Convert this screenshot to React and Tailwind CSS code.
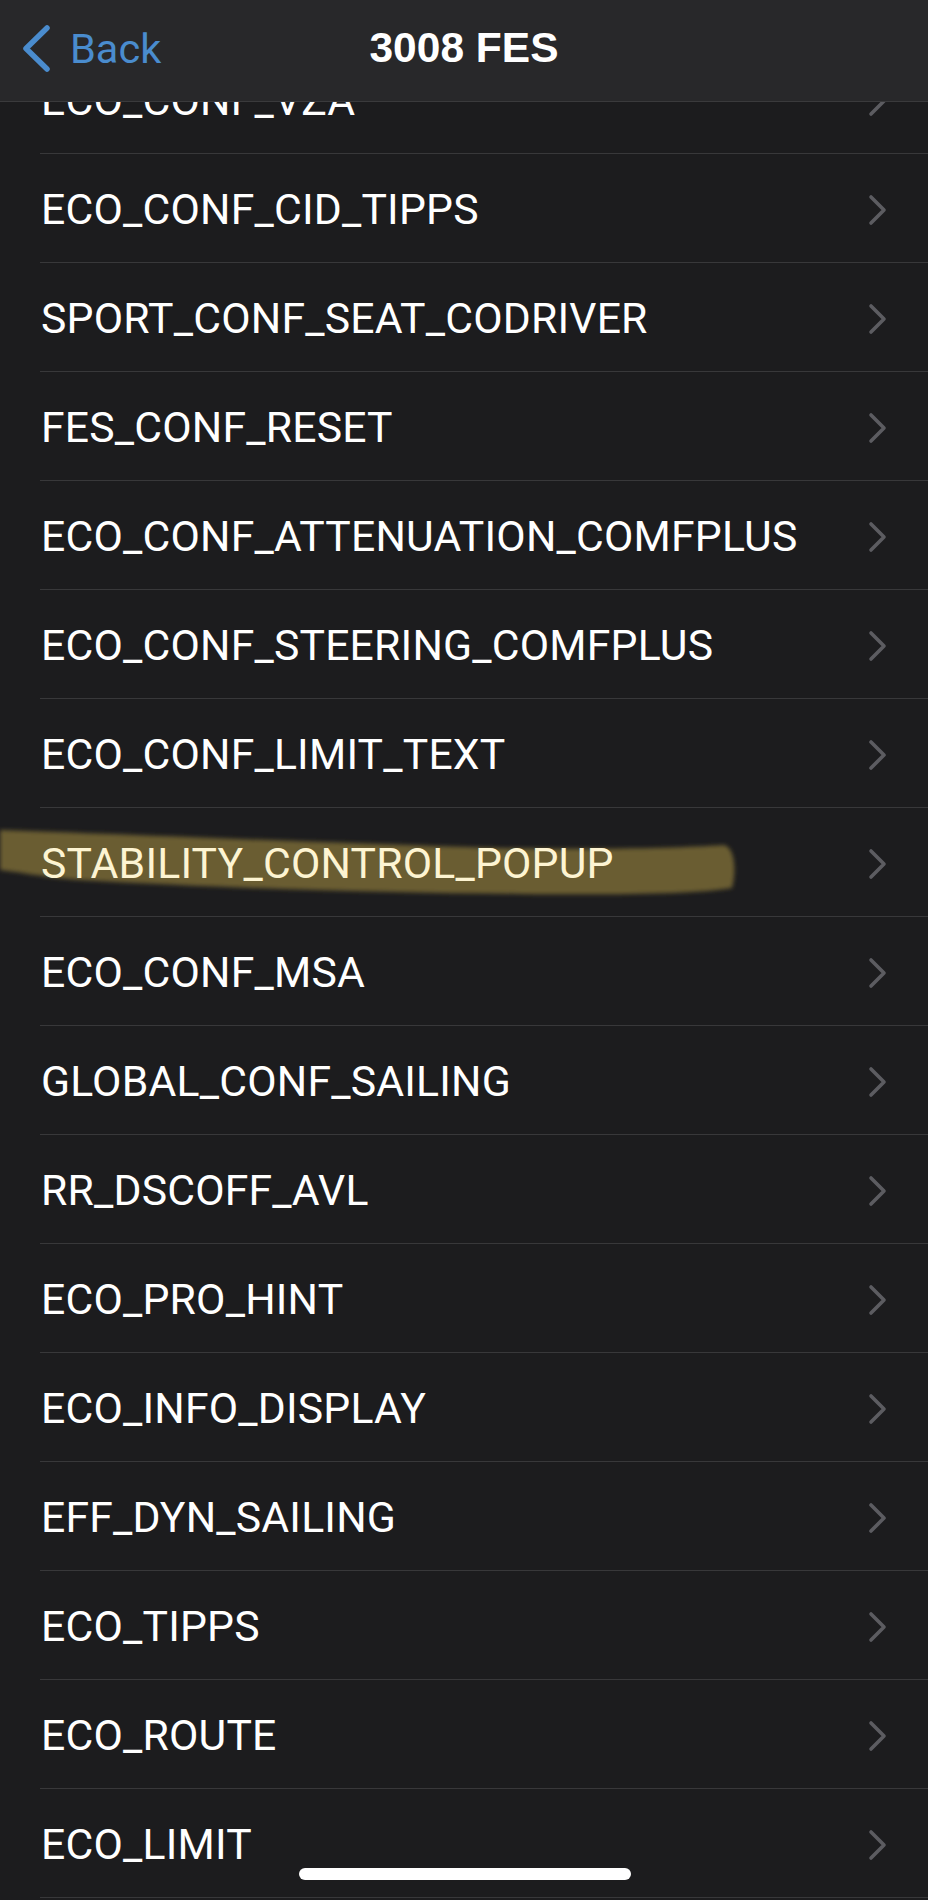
import React from "react";

const ITEMS = [
  "ECO_CONF_VZA",
  "ECO_CONF_CID_TIPPS",
  "SPORT_CONF_SEAT_CODRIVER",
  "FES_CONF_RESET",
  "ECO_CONF_ATTENUATION_COMFPLUS",
  "ECO_CONF_STEERING_COMFPLUS",
  "ECO_CONF_LIMIT_TEXT",
  "STABILITY_CONTROL_POPUP",
  "ECO_CONF_MSA",
  "GLOBAL_CONF_SAILING",
  "RR_DSCOFF_AVL",
  "ECO_PRO_HINT",
  "ECO_INFO_DISPLAY",
  "EFF_DYN_SAILING",
  "ECO_TIPPS",
  "ECO_ROUTE",
  "ECO_LIMIT",
];

function Chevron() {
  return (
    <svg width="22" height="34" viewBox="0 0 22 34" className="shrink-0 mt-[1px]">
      <path
        d="M4 4 L17 17 L4 30"
        fill="none"
        stroke="#5c5c61"
        strokeWidth="3.6"
        strokeLinecap="round"
        strokeLinejoin="round"
      />
    </svg>
  );
}

function Highlight() {
  return (
    <svg
      className="absolute left-0 top-0 pointer-events-none"
      width="760"
      height="109"
      viewBox="0 0 760 109"
    >
      <defs>
        <filter id="blur" x="-5%" y="-30%" width="110%" height="160%">
          <feGaussianBlur stdDeviation="2.2" />
        </filter>
      </defs>
      <path
        d="M0 22 C 120 26, 300 34, 500 40 C 600 42, 680 40, 724 37 C 736 40, 736 66, 732 80 C 700 86, 620 87, 520 86 C 380 85, 220 80, 80 72 C 40 69, 20 64, 0 62 Z"
        fill="#6a5d31"
        filter="url(#blur)"
      />
    </svg>
  );
}

function Row({ label }) {
  const hl = label === "STABILITY_CONTROL_POPUP";
  return (
    <div className="relative h-[109px]">
      {hl && <Highlight />}
      <div className="relative ml-[40px] h-full border-b border-[#38383a] flex items-center justify-between pr-[39px] pt-[2px]">
        <span
          className={
            "text-[42.7px] leading-none tracking-[0.2px] whitespace-nowrap pl-[1px] " +
            (hl ? "text-[#fdf4d2]" : "text-white")
          }
          style={{ fontFamily: "Roboto, 'Liberation Sans', sans-serif" }}
        >
          {label}
        </span>
        <Chevron />
      </div>
    </div>
  );
}

export default function App() {
  return (
    <div className="relative w-[928px] h-[1900px] overflow-hidden bg-[#1c1c1e]">
      <div className="pt-[45px]">
        {ITEMS.map((it) => (
          <Row key={it} label={it} />
        ))}
      </div>

      <div className="absolute left-0 top-0 w-full h-[102px] bg-[#28282a] border-b border-[#3a3a3c]">
        <div className="relative h-full flex items-start">
          <div className="flex items-start pl-[20px] pt-[24px]">
            <svg width="32" height="50" viewBox="0 0 32 50">
              <path
                d="M27 4 L6 24.5 L27 45"
                fill="none"
                stroke="#4a8cce"
                strokeWidth="5.5"
                strokeLinecap="round"
                strokeLinejoin="round"
              />
            </svg>
            <span
              className="ml-[18px] mt-[4px] text-[41.5px] leading-none text-[#4a8cce]"
              style={{ fontFamily: "Roboto, 'Liberation Sans', sans-serif" }}
            >
              Back
            </span>
          </div>
          <div className="absolute left-0 right-0 top-[27px] flex justify-center">
            <span
              className="text-[42.5px] leading-none font-bold text-white"
              style={{ fontFamily: "'Liberation Sans', Arial, sans-serif" }}
            >
              3008 FES
            </span>
          </div>
        </div>
      </div>

      <div className="absolute left-[299px] top-[1868px] w-[332px] h-[12px] rounded-full bg-white" />
    </div>
  );
}
